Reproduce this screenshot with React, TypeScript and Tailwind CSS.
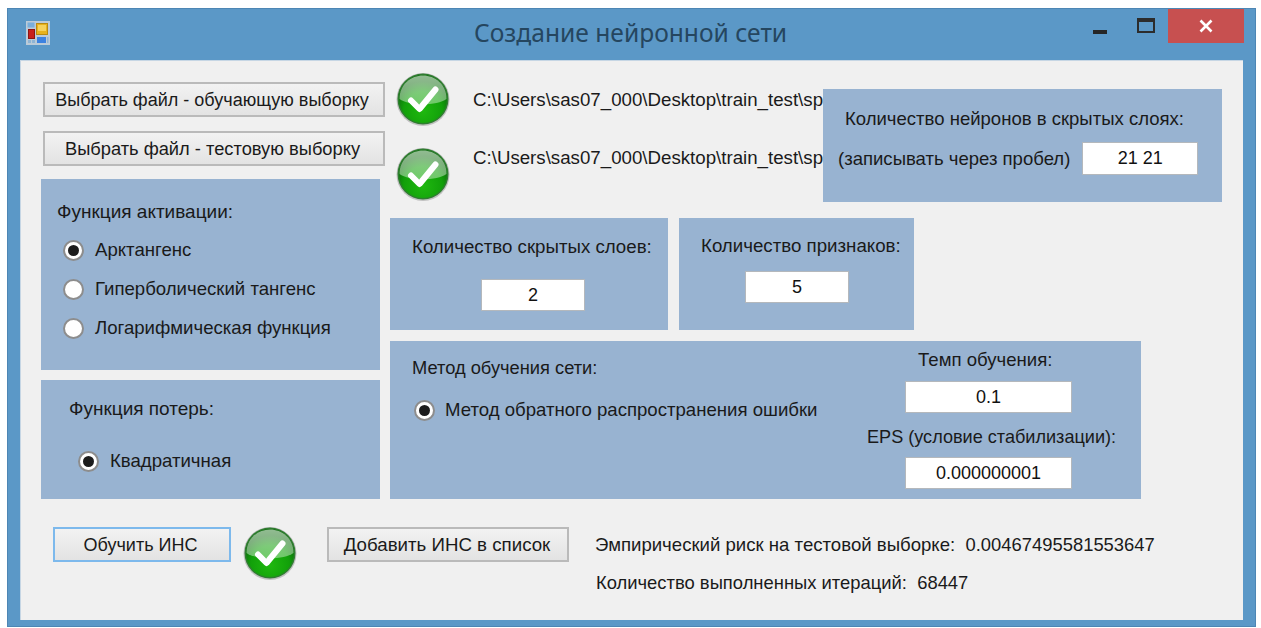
import React from "react";

// Glossy green "done" badge shown next to finished steps
function CheckBadge({ id }: { id: string }) {
  return (
    <svg width="54" height="54" viewBox="0 0 54 54" className="shrink-0 block">
      <defs>
        <radialGradient id={`${id}-g`} cx="50%" cy="75%" r="62%">
          <stop offset="0%" stopColor="#1fb80f" />
          <stop offset="65%" stopColor="#12a00a" />
          <stop offset="100%" stopColor="#0c6a0c" />
        </radialGradient>
        <linearGradient id={`${id}-s`} x1="0" y1="0" x2="0" y2="1">
          <stop offset="0%" stopColor="#ffffff" stopOpacity="0.55" />
          <stop offset="100%" stopColor="#ffffff" stopOpacity="0.38" />
        </linearGradient>
      </defs>
      <circle cx="27" cy="27.5" r="26.5" fill="#000" opacity="0.2" />
      <circle cx="27" cy="27" r="25.5" fill="#2f7d30" />
      <circle cx="27" cy="27" r="24" fill={`url(#${id}-g)`} />
      <path d="M3.5 27 C3.5 12 15 3.5 27 3.5 C39 3.5 50.5 12 50.5 27 C41 34 13 34 3.5 27 Z" fill={`url(#${id}-s)`} />
      <path d="M15 28.5 L23.5 37 L39.5 17.5" fill="none" stroke="#fff" strokeWidth="6" strokeLinecap="round" strokeLinejoin="round" />
    </svg>
  );
}

// Small application icon in the caption
function AppIcon() {
  return (
    <svg width="24" height="24" viewBox="0 0 24 24" className="block">
      <rect width="24" height="24" fill="#bccbd8" />
      <rect x="1.5" y="1.5" width="7" height="5" fill="#79aedb" />
      <rect x="10.5" y="2.5" width="11" height="11" fill="#e8b21c" stroke="#b98a12" />
      <rect x="12" y="4" width="8" height="6" fill="#f6d25c" />
      <rect x="2.5" y="8.5" width="6" height="9" fill="#c8201c" stroke="#8e1512" />
      <rect x="11" y="16" width="9" height="6" fill="#3d82e0" />
      <rect x="2" y="19" width="3" height="3" fill="#8fb4d4" />
      <rect x="6" y="19" width="3" height="3" fill="#8fb4d4" />
      <rect x="21" y="16" width="1.5" height="6" fill="#8fb4d4" />
    </svg>
  );
}

function Radio({ checked, label, gap = "ml-[11px]" }: { checked?: boolean; label: string; gap?: string }) {
  return (
    <div className="flex items-center h-[22px]">
      <span className="w-[21px] h-[21px] rounded-full bg-white border-2 border-[#8d8d8d] flex items-center justify-center shrink-0">
        {checked && <span className="w-[11px] h-[11px] rounded-full bg-[#1c1c1c]" />}
      </span>
      <span className={`${gap} whitespace-nowrap`}>{label}</span>
    </div>
  );
}

function Field({ value, className }: { value: string; className: string }) {
  return (
    <input
      readOnly
      value={value}
      className={`block h-[32px] bg-white border border-[#b4b8bc] text-center text-[18px] text-[#111] outline-none ${className}`}
    />
  );
}

function Button({ label, className }: { label: string; className: string }) {
  return (
    <button className={`block h-[35px] border-2 text-center text-[#1a1a1a] bg-gradient-to-b from-[#f2f2f2] to-[#e3e3e3] whitespace-nowrap ${className}`}>
      {label}
    </button>
  );
}

export default function App() {
  return (
    <div className="w-[1261px] h-[628px] bg-white pt-[8px] pl-[7px] overflow-hidden text-[18.6px] leading-[22px] text-[#1a1a1a] font-['Liberation_Sans',Arial,sans-serif]">
      <div className="w-[1249px] h-[619px] bg-[#5b98c7] border border-[#4d86b4] flex flex-col">
        {/* Caption */}
        <div className="h-[51px] flex items-start shrink-0">
          <div className="ml-[18px] mt-[12px]">
            <AppIcon />
          </div>
          <div className="ml-[424px] mt-[8px] text-[24.6px] leading-[32px] text-[#25465f] whitespace-nowrap font-['Noto_Sans',sans-serif]">
            Создание нейронной сети
          </div>
          <div className="ml-auto flex items-start">
            <div className="w-[14px] h-[4px] bg-[#262626] mt-[21px]" />
            <div className="w-[18px] h-[15px] ml-[30px] mt-[9px] border-2 border-t-[4px] border-[#2c2c2c]" />
            <div className="w-[76px] h-[34px] ml-[13px] mr-[11px] bg-[#c75050] flex items-center justify-center text-white">
              <svg width="14" height="14" viewBox="0 0 14 14">
                <path d="M1.5 1.5 L12.5 12.5 M12.5 1.5 L1.5 12.5" stroke="#fff" strokeWidth="2.6" />
              </svg>
            </div>
          </div>
        </div>

        {/* Client area */}
        <div className="relative w-[1223px] h-[560px] ml-[12px] bg-[#f0f0f0] border-t border-l border-[#c6d6e4] pl-[20px] overflow-hidden">
          <div className="flex">
            {/* Left column */}
            <div className="w-[339px] shrink-0 pt-[21px]">
              <Button label="Выбрать файл - обучающую выборку" className="w-[342px] ml-[2px] pr-[4px] text-[18.05px] border-[#bababa]" />
              <Button label="Выбрать файл - тестовую выборку" className="w-[342px] ml-[2px] pr-[3px] mt-[14px] text-[18.3px] border-[#bababa]" />
              <div className="h-[191px] mt-[13px] bg-[#98b3d1] pl-[16px] pt-[22px]">
                <div className="text-[19px]">Функция активации:</div>
                <div className="ml-[6px] mt-[16px] flex flex-col gap-[17px]">
                  <Radio checked label="Арктангенс" />
                  <Radio label="Гиперболический тангенс" />
                  <Radio label="Логарифмическая функция" />
                </div>
              </div>
              <div className="h-[119px] mt-[10px] bg-[#98b3d1] pl-[28px] pt-[18px]">
                <div className="text-[19px]">Функция потерь:</div>
                <div className="ml-[9px] mt-[30px]">
                  <Radio checked label="Квадратичная" />
                </div>
              </div>
            </div>

            {/* Main column */}
            <div className="ml-[10px] w-[860px]">
              <div className="flex items-start ml-[6px] mt-[11px]">
                <CheckBadge id="train-file" />
                <span className="ml-[23px] mt-[17px] text-[18.7px] whitespace-nowrap">C:\Users\sas07_000\Desktop\train_test\sp</span>
              </div>
              <div className="flex items-start ml-[6px] mt-[21px]">
                <CheckBadge id="test-file" />
                <span className="ml-[23px] text-[18.7px] whitespace-nowrap">C:\Users\sas07_000\Desktop\train_test\sp</span>
              </div>
              <div className="flex gap-[11px] mt-[17px]">
                <div className="w-[278px] h-[112px] bg-[#98b3d1] pt-[18px] pl-[22px]">
                  <div className="whitespace-nowrap text-[18.7px]">Количество скрытых слоев:</div>
                  <Field value="2" className="w-[104px] mt-[21px] ml-[69px]" />
                </div>
                <div className="w-[235px] h-[112px] bg-[#98b3d1] pt-[17px] pl-[22px]">
                  <div className="whitespace-nowrap text-[18.7px]">Количество признаков:</div>
                  <Field value="5" className="w-[104px] mt-[14px] ml-[44px]" />
                </div>
              </div>
              <div className="w-[751px] h-[158px] mt-[11px] bg-[#98b3d1] flex">
                <div className="pl-[22px] pt-[16px] w-[477px]">
                  <div className="text-[18.3px]">Метод обучения сети:</div>
                  <div className="mt-[20px] ml-[2px]">
                    <Radio checked label="Метод обратного распространения ошибки" gap="ml-[10px]" />
                  </div>
                </div>
                <div className="w-[260px] flex flex-col items-start pt-[8px]">
                  <div className="ml-[51px] whitespace-nowrap">Темп обучения:</div>
                  <Field value="0.1" className="w-[167px] ml-[38px] mt-[10px]" />
                  <div className="whitespace-nowrap mt-[13px] text-[18.1px]">EPS (условие стабилизации):</div>
                  <Field value="0.000000001" className="w-[167px] ml-[38px] mt-[9px]" />
                </div>
              </div>
            </div>
          </div>

          {/* Bottom row */}
          <div className="flex items-start mt-[28px] ml-[12px]">
            <Button label="Обучить ИНС" className="w-[178px] pr-[3px] text-[18px] border-[#7db9ec]" />
            <div className="ml-[12px] -mt-[1px]">
              <CheckBadge id="train" />
            </div>
            <Button label="Добавить ИНС в список" className="w-[242px] ml-[30px] pr-[2px] text-[18.7px] border-[#bababa]" />
            <div className="ml-[26px] pt-[7px] flex flex-col gap-[16px]">
              <div className="whitespace-nowrap">Эмпирический риск на тестовой выборке:&nbsp; <span className="text-[18.4px]">0.00467495581553647</span></div>
              <div className="whitespace-nowrap ml-[1px] text-[18.4px]">Количество выполненных итераций:&nbsp; 68447</div>
            </div>
          </div>

          {/* Neuron count panel sits over the file paths */}
          <div className="absolute left-[802px] top-[28px] w-[399px] h-[113px] bg-[#98b3d1] pl-[15px]">
            <div className="ml-[7px] mt-[19px] whitespace-nowrap text-[18.55px]">Количество нейронов в скрытых слоях:</div>
            <div className="flex items-center mt-[12px]">
              <span className="whitespace-nowrap text-[18.55px]">(записывать через пробел)</span>
              <Field value="21 21" className="w-[116px] ml-[12px] h-[33px]" />
            </div>
          </div>
        </div>
      </div>
    </div>
  );
}
